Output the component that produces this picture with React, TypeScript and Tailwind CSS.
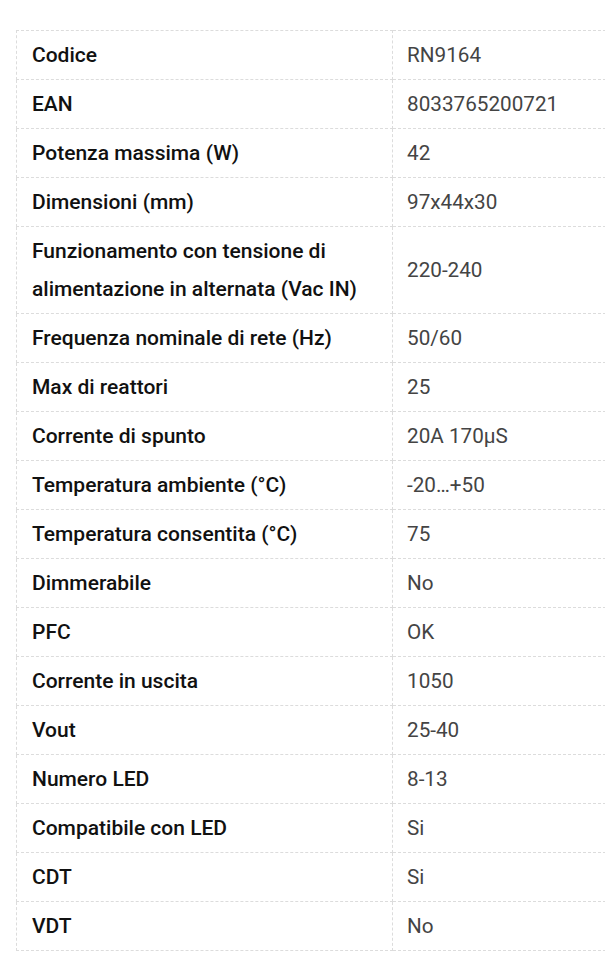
import React from 'react';

const rows: [string, string][] = [
  ['Codice', 'RN9164'],
  ['EAN', '8033765200721'],
  ['Potenza massima (W)', '42'],
  ['Dimensioni (mm)', '97x44x30'],
  ['Funzionamento con tensione di alimentazione in alternata (Vac IN)', '220-240'],
  ['Frequenza nominale di rete (Hz)', '50/60'],
  ['Max di reattori', '25'],
  ['Corrente di spunto', '20A 170µS'],
  ['Temperatura ambiente (°C)', '-20…+50'],
  ['Temperatura consentita (°C)', '75'],
  ['Dimmerabile', 'No'],
  ['PFC', 'OK'],
  ['Corrente in uscita', '1050'],
  ['Vout', '25-40'],
  ['Numero LED', '8-13'],
  ['Compatibile con LED', 'Si'],
  ['CDT', 'Si'],
  ['VDT', 'No'],
];

const App = () => {
  return (
    <div className="w-[605px] h-[977px] overflow-hidden bg-white" style={{ fontFamily: 'Roboto, "Noto Sans", sans-serif' }}>
      <div className="pt-[30px] pl-4">
        <table className="w-[620px] border-collapse leading-[38px]">
          <tbody>
            {rows.map(([label, value]) => (
              <tr key={label}>
                <th className="w-[376px] border border-dashed border-[#dcdcdc] py-[5px] pl-[15px] pr-4 text-left align-middle text-[21px] font-medium text-[#111]">
                  {label}
                </th>
                <td className="border border-dashed border-[#dcdcdc] py-[5px] pl-[14px] pr-4 text-left align-middle text-[20.7px] font-normal text-[#444]">
                  {value}
                </td>
              </tr>
            ))}
          </tbody>
        </table>
      </div>
    </div>
  );
};

export default App;
